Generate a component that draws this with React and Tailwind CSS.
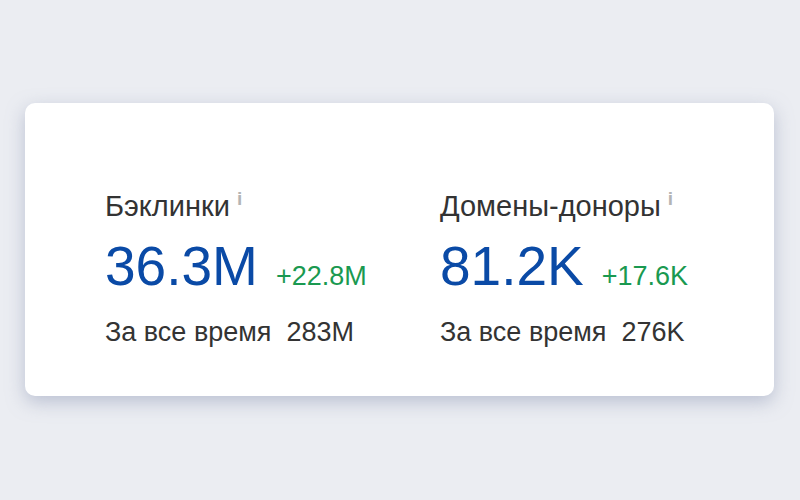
export default function App() {
  const font = { fontFamily: '"Liberation Sans", Arial, sans-serif' };
  const Col = ({ title, value, delta, total, w }) => (
    <div className={w}>
      <div className="flex items-start text-[29px] leading-[32px] text-[#333333]">
        <span>{title}</span>
        <span className="ml-[7px] text-[19px] leading-[18px] font-bold text-[#b4b4b4]">i</span>
      </div>
      <div className="mt-[17px] flex items-baseline">
        <span className="text-[55px] leading-[55px] text-[#0a4aa6]">{value}</span>
        <span className="ml-[18px] text-[27px] leading-[30px] text-[#1a9950]">{delta}</span>
      </div>
      <div className="mt-[22px] text-[27px] leading-[32px] text-[#333333]">
        За все время&nbsp;&nbsp;{total}
      </div>
    </div>
  );
  return (
    <div className="w-[800px] h-[500px] bg-[#ebedf2] pt-[103px] pl-[25px]" style={font}>
      <div className="w-[749px] h-[293px] bg-white rounded-[10px] shadow-[0_6px_18px_rgba(140,150,180,0.5)] pl-[80px] pt-[87px] flex">
        <Col w="w-[335px]" title="Бэклинки" value="36.3M" delta="+22.8M" total="283M" />
        <Col w="w-[300px]" title="Домены-доноры" value="81.2K" delta="+17.6K" total="276K" />
      </div>
    </div>
  );
}
